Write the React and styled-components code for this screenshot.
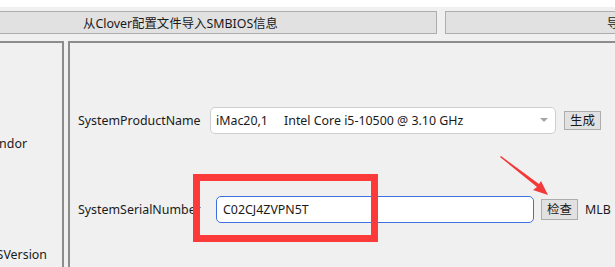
import styled, { createGlobalStyle } from 'styled-components'

const Global = createGlobalStyle`
  body {
    margin: 0;
    background: #f0f0f0;
    font-family: "Noto Sans", "Noto Sans CJK SC", sans-serif;
    font-size: 12.4px;
    color: #1a1a1a;
  }
`

const Window = styled.div`
  position: relative;
  width: 615px;
  height: 267px;
  overflow: hidden;
  background: #f0f0f0;
`

const TopStrip = styled.div`
  height: 7px;
  background: #fff;
`

const Toolbar = styled.div`
  display: flex;
  gap: 8px;
  padding-top: 4px;
  height: 23px;
  margin-left: -76px;
`

const ToolButton = styled.div`
  flex: none;
  width: ${p => p.w}px;
  height: 23px;
  box-sizing: border-box;
  border: 1px solid #adadad;
  background: #e1e1e1;
  display: flex;
  align-items: center;
  justify-content: ${p => (p.start ? 'flex-start' : 'center')};
  padding-left: ${p => p.pad || 0}px;
  white-space: nowrap;
`

const Body = styled.div`
  display: flex;
  gap: 4px;
  margin-top: 7px;
`

const Panel = styled.div`
  box-sizing: border-box;
  height: 226px;
  border-top: 2px solid #8c8c8c;
  ${p => (p.left ? 'width: 64px; border-right: 2px solid #8c8c8c;' : 'flex: 1; border-left: 2px solid #8c8c8c;')}
  overflow: hidden;
  position: relative;
`

const SideLabel = styled.div`
  position: absolute;
  top: ${p => p.top}px;
  right: ${p => p.right}px;
  white-space: nowrap;
`

const Content = styled.div`
  display: flex;
  flex-direction: column;
  padding: 64px 0 0 8px;
  gap: 63px;
`

const Row = styled.div`
  display: flex;
  align-items: center;
  height: 26px;
`

const Label = styled.div`
  width: ${p => p.w}px;
  flex: none;
  white-space: nowrap;
  overflow: hidden;
`

const Combo = styled.div`
  width: 346px;
  height: 27px;
  box-sizing: border-box;
  border: 1px solid #cfcfcf;
  border-radius: 5px;
  background: #fff;
  display: flex;
  align-items: center;
  padding: 0 5px;
  white-space: pre;
`

const ComboText = styled.span`
  flex: 1;
`

const Arrow = styled.span`
  width: 0;
  height: 0;
  border-left: 4px solid transparent;
  border-right: 4px solid transparent;
  border-top: 4px solid #a6a6a6;
  margin-right: 2px;
`

const Input = styled.div`
  width: 318px;
  height: 27px;
  box-sizing: border-box;
  border: 1px solid #3e6fe0;
  border-radius: 5px;
  background: #fff;
  display: flex;
  align-items: center;
  padding-left: 6px;
`

const SmallButton = styled.div`
  margin-left: ${p => p.ml}px;
  width: 37px;
  height: ${p => p.h}px;
  box-sizing: border-box;
  border: 1px solid #adadad;
  background: #e1e1e1;
  display: flex;
  align-items: center;
  justify-content: center;
`

const Tail = styled.span`
  margin-left: 7px;
  white-space: nowrap;
`

const Highlight = styled.div`
  position: absolute;
  left: 193px;
  top: 174px;
  width: 185px;
  height: 68px;
  box-sizing: border-box;
  border: 7px solid #fd3a3a;
`

const Pointer = styled.svg`
  position: absolute;
  left: 495px;
  top: 150px;
`

function App() {
  return (
    <>
      <Global />
      <Window>
        <TopStrip />
        <Toolbar>
          <ToolButton w={513}>从Clover配置文件导入SMBIOS信息</ToolButton>
          <ToolButton w={300} start pad={161}>导出</ToolButton>
        </Toolbar>
        <Body>
          <Panel left>
            <SideLabel top={92} right={35}>SystemVendor</SideLabel>
            <SideLabel top={203} right={15}>BIOSVersion</SideLabel>
          </Panel>
          <Panel>
            <Content>
              <Row>
                <Label w={132}>SystemProductName</Label>
                <Combo>
                  <ComboText>{'iMac20,1     Intel Core i5-10500 @ 3.10 GHz'}</ComboText>
                  <Arrow />
                </Combo>
                <SmallButton ml={8} h={19}>生成</SmallButton>
              </Row>
              <Row>
                <Label w={138}>SystemSerialNumber</Label>
                <Input>C02CJ4ZVPN5T</Input>
                <SmallButton ml={7} h={21}>检查</SmallButton>
                <Tail>MLB</Tail>
              </Row>
            </Content>
          </Panel>
        </Body>
        <Highlight />
        <Pointer width="60" height="50" viewBox="0 0 60 50">
          <polygon points="5,7 6,6 44,34 46,31 53,45 38,40 42,37" fill="#f23a3a" />
        </Pointer>
      </Window>
    </>
  )
}

export default App
